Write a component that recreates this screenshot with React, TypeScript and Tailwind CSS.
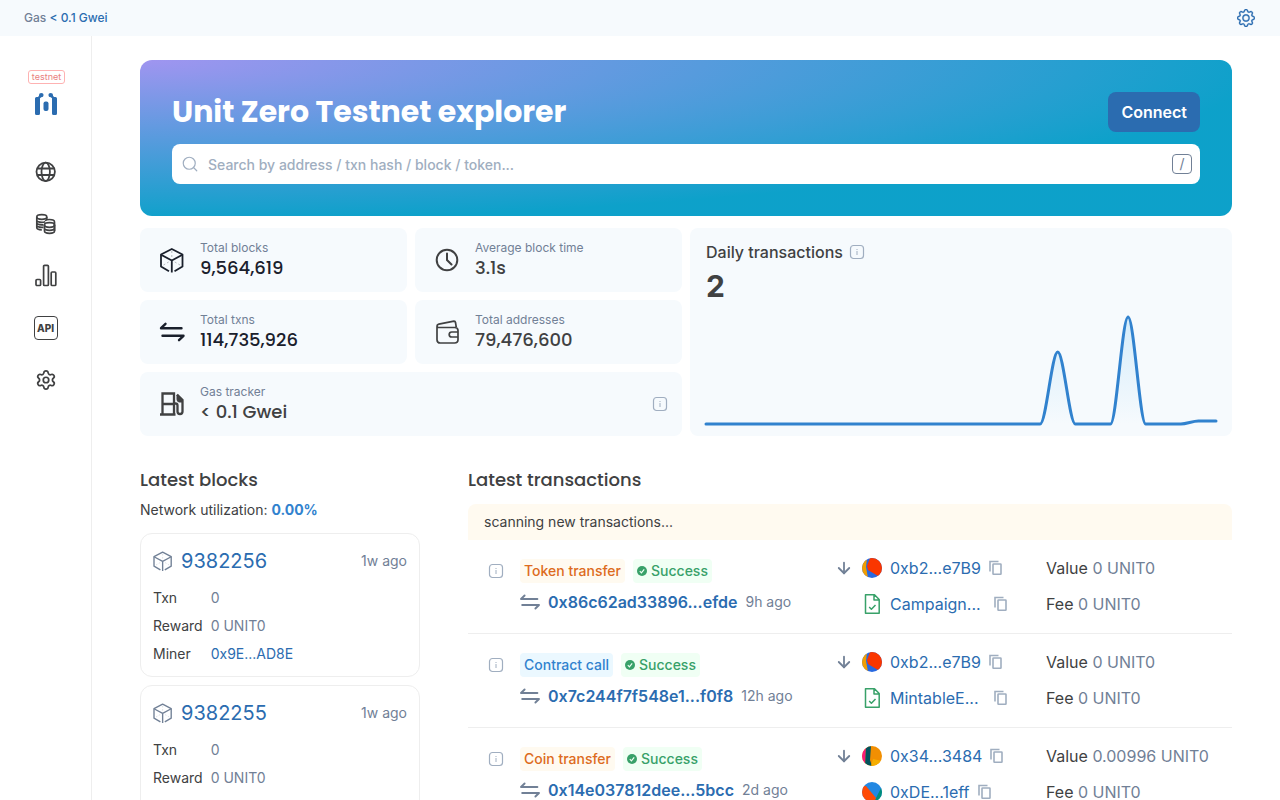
import type { ReactNode } from 'react'
import { ArrowDown, Search, Settings } from 'lucide-react'
import { BsGear } from 'react-icons/bs'

const chartValues = [
  0, 0, 0, 0, 0, 0, 0, 0, 0, 0, 0, 0, 0, 0, 0, 0, 0, 0, 0, 0, 72, 0, 0, 0, 107, 0, 0, 0, 3, 3,
]

const blocks = [
  { height: '9382256', age: '1w ago', txn: '0', reward: '0 UNIT0', miner: '0x9E...AD8E' },
  { height: '9382255', age: '1w ago', txn: '0', reward: '0 UNIT0', miner: '0x9E...AD8E' },
]

type Party = { name: string; avatar: 'red' | 'amber' | 'blue' | 'contract' }

type Transaction = {
  type: string
  tone: 'orange' | 'blue'
  hash: string
  age: string
  from: Party
  to: Party
  value: string
  fee: string
}

const transactions: Transaction[] = [
  {
    type: 'Token transfer',
    tone: 'orange',
    hash: '0x86c62ad33896...efde',
    age: '9h ago',
    from: { name: '0xb2...e7B9', avatar: 'red' },
    to: { name: 'Campaign...', avatar: 'contract' },
    value: '0 UNIT0',
    fee: '0 UNIT0',
  },
  {
    type: 'Contract call',
    tone: 'blue',
    hash: '0x7c244f7f548e1...f0f8',
    age: '12h ago',
    from: { name: '0xb2...e7B9', avatar: 'red' },
    to: { name: 'MintableE...', avatar: 'contract' },
    value: '0 UNIT0',
    fee: '0 UNIT0',
  },
  {
    type: 'Coin transfer',
    tone: 'orange',
    hash: '0x14e037812dee...5bcc',
    age: '2d ago',
    from: { name: '0x34...3484', avatar: 'amber' },
    to: { name: '0xDE...1eff', avatar: 'blue' },
    value: '0.00996 UNIT0',
    fee: '0 UNIT0',
  },
]

export default function App() {
  return (
    <div className="min-h-screen bg-white font-[Inter,sans-serif] text-base text-[#404142]">
      <TopBar />
      <div className="flex min-h-[calc(100vh-36px)]">
        <Sidebar />
        <main className="min-w-0 flex-1 px-12 pt-6 pb-12">
          <Hero />
          <Stats />
          <div className="mt-8 flex gap-12">
            <LatestBlocks />
            <LatestTransactions />
          </div>
        </main>
      </div>
    </div>
  )
}

function TopBar() {
  return (
    <header className="flex h-9 items-center justify-between bg-[#f6fafd] px-6 text-xs font-medium">
      <p className="text-[#718096]">
        Gas <a href="#gas" className="text-[#2b6cb0]">&lt; 0.1 Gwei</a>
      </p>
      <button type="button" aria-label="Settings" className="text-[#2b6cb0]">
        <BsGear size={18} strokeWidth={0.3} className="mr-px" />
      </button>
    </header>
  )
}

function Sidebar() {
  return (
    <aside className="flex w-[92px] shrink-0 flex-col items-center border-r border-[#eeeeee] pt-[34px]">
      <span className="ml-0.5 rounded-[3px] border border-[#feb2b2] px-[3px] text-[9px] leading-3 text-[#e98080]">
        testnet
      </span>
      <a href="#home" aria-label="Home" className="mt-2">
        <LogoIcon />
      </a>
      <nav className="mt-[41px] flex flex-col items-center gap-[22px]">
        <NavLink label="Blockchain"><GlobeIcon /></NavLink>
        <NavLink label="Tokens"><CoinsIcon /></NavLink>
        <NavLink label="Charts & stats"><BarsIcon /></NavLink>
        <NavLink label="API">
          <span className="flex size-6 items-center justify-center rounded-[4px] border-[1.5px] border-[#404142] text-[10px] font-extrabold">
            API
          </span>
        </NavLink>
        <NavLink label="Other"><Settings size={22} strokeWidth={1.9} /></NavLink>
      </nav>
    </aside>
  )
}

function NavLink({ label, children }: { label: string; children: ReactNode }) {
  return (
    <a href="#nav" aria-label={label} className="flex size-[30px] items-center justify-center">
      {children}
    </a>
  )
}

function Hero() {
  return (
    <section className="rounded-xl bg-[#4299e1] bg-[radial-gradient(103.03%_103.03%_at_0%_0%,rgba(183,148,244,0.8)_0%,rgba(0,163,196,0.8)_100%)] p-8">
      <div className="flex items-center justify-between">
        <h1 className="font-[Poppins,Inter,sans-serif] text-[30px] leading-10 font-bold text-white">
          Unit Zero Testnet explorer
        </h1>
        <button type="button" className="h-10 rounded-lg bg-[#2b6cb0] px-[13px] font-semibold text-white">
          Connect
        </button>
      </div>
      <form className="mt-3 flex h-10 items-center rounded-lg bg-white px-2">
        <Search size={18} strokeWidth={1.6} className="mx-px shrink-0 text-[#a0aec0]" />
        <input
          type="text"
          aria-label="Search"
          placeholder="Search by address / txn hash / block / token..."
          className="ml-2 min-w-0 flex-1 pt-0.5 text-sm font-medium outline-none placeholder:text-[#a0aec0]"
        />
        <kbd className="flex size-5 shrink-0 items-center justify-center rounded-[4px] border border-[#718096] font-[Inter,sans-serif] text-sm text-[#718096]">
          /
        </kbd>
      </form>
    </section>
  )
}

function Stats() {
  return (
    <section className="mt-3 grid grid-cols-2 gap-2">
      <div className="grid grid-cols-2 gap-2">
        <StatCard label="Total blocks" value="9,564,619" icon={<CubeIcon size={30} />} dark />
        <StatCard label="Average block time" value="3.1s" icon={<ClockIcon />} />
        <StatCard label="Total txns" value="114,735,926" icon={<TxnIcon size={30} />} dark />
        <StatCard label="Total addresses" value="79,476,600" icon={<WalletIcon />} />
        <div className="col-span-2">
          <StatCard label="Gas tracker" value="< 0.1 Gwei" icon={<GasIcon />} info />
        </div>
      </div>
      <DailyTransactions />
    </section>
  )
}

interface StatCardProps {
  label: string
  value: string
  icon: ReactNode
  dark?: boolean
  info?: boolean
}

function StatCard({ label, value, icon, dark, info }: StatCardProps) {
  return (
    <div className={`flex h-16 items-center rounded-lg bg-[#f6fafd] pr-3.5 pl-4 ${dark ? 'text-[#1a202c]' : ''}`}>
      {icon}
      <div className="ml-3.5 flex-1">
        <p className="text-xs leading-4 text-[#718096]">{label}</p>
        <p className="font-[Poppins,Inter,sans-serif] text-lg leading-6 font-medium">{value}</p>
      </div>
      {info && <InfoIcon />}
    </div>
  )
}

function DailyTransactions() {
  return (
    <div className="flex flex-col rounded-lg bg-[#f6fafd] px-4 pt-3">
      <div className="flex items-center gap-1.5">
        <h2 className="font-medium">Daily transactions</h2>
        <InfoIcon />
      </div>
      <p className="mt-0.5 text-[30px] leading-10 font-bold">2</p>
      <Chart />
    </div>
  )
}

function Chart() {
  const step = 510 / (chartValues.length - 1)
  const base = 118
  let line = `M0 ${base - chartValues[0]}`
  for (let i = 1; i < chartValues.length; i++) {
    const x0 = (i - 1) * step
    const x1 = i * step
    const y0 = base - chartValues[i - 1]
    const y1 = base - chartValues[i]
    line += ` C${x0 + step / 3} ${y0} ${x1 - step / 3} ${y1} ${x1} ${y1}`
  }

  return (
    <svg viewBox="0 0 510 128" preserveAspectRatio="none" className="h-32 w-full overflow-visible" aria-hidden="true">
      <defs>
        <linearGradient id="area" x1="0" y1="0" x2="0" y2="1">
          <stop offset="0" stopColor="#bee3f8" stopOpacity="0.6" />
          <stop offset="1" stopColor="#bee3f8" stopOpacity="0" />
        </linearGradient>
      </defs>
      <path d={`${line} V${base} H0 Z`} fill="url(#area)" />
      <path
        d={line}
        fill="none"
        stroke="#3182ce"
        strokeWidth="3"
        strokeLinecap="round"
        strokeLinejoin="round"
        vectorEffect="non-scaling-stroke"
      />
    </svg>
  )
}

function LatestBlocks() {
  return (
    <section className="w-[280px] shrink-0">
      <h2 className="font-[Poppins,Inter,sans-serif] text-lg leading-6 font-medium">Latest blocks</h2>
      <p className="mt-2 text-sm">
        Network utilization: <span className="font-bold text-[#3182ce]">0.00%</span>
      </p>
      <div className="mt-[13px] flex flex-col gap-2">
        {blocks.map((block) => (
          <article key={block.height} className="rounded-xl border border-[#eeeeee] p-3 text-sm">
            <div className="mb-3 flex h-[30px] items-center">
              <span className="-ml-[3px] text-[#718096]"><CubeIcon size={24} thin /></span>
              <a href="#block" className="ml-[7px] text-xl text-[#2b6cb0]">{block.height}</a>
              <span className="ml-auto text-[#718096]">{block.age}</span>
            </div>
            <dl className="grid grid-cols-[auto_1fr] gap-2 text-[#718096]">
              <dt className="text-[#404142]">Txn</dt>
              <dd>{block.txn}</dd>
              <dt className="text-[#404142]">Reward</dt>
              <dd>{block.reward}</dd>
              <dt className="text-[#404142]">Miner</dt>
              <dd><a href="#miner" className="text-[#2b6cb0]">{block.miner}</a></dd>
            </dl>
          </article>
        ))}
      </div>
    </section>
  )
}

function LatestTransactions() {
  return (
    <section className="min-w-0 flex-1">
      <h2 className="font-[Poppins,Inter,sans-serif] text-lg leading-6 font-medium">Latest transactions</h2>
      <p className="mt-3 rounded-t-lg bg-[#fffaf0] px-4 py-2 text-sm">scanning new transactions...</p>
      <ul>
        {transactions.map((tx) => (
          <TransactionRow key={tx.hash} tx={tx} />
        ))}
      </ul>
    </section>
  )
}

function TransactionRow({ tx }: { tx: Transaction }) {
  const tone = tx.tone === 'orange' ? 'bg-[#fffaf0] text-[#dd6b20]' : 'bg-[#ebf8ff] text-[#3182ce]'

  return (
    <li className="grid grid-cols-[52px_minmax(0,1fr)_210px_186px] border-b border-[#eeeeee] pt-4 pb-[17px]">
      <button type="button" aria-label="Transaction details" className="mt-[7px] ml-5 h-4 w-4">
        <InfoIcon />
      </button>
      <div className="mt-[3px]">
        <div className="flex gap-2">
          <span className={`rounded-[4px] px-1 py-0.5 text-sm font-medium ${tone}`}>{tx.type}</span>
          <span className="flex items-center gap-1 rounded-[4px] bg-[#f0fff4] px-1 py-0.5 text-sm font-medium text-[#38a169]">
            <SuccessIcon />
            Success
          </span>
        </div>
        <div className="mt-[7px] flex items-center">
          <span className="-ml-[3px] text-[#718096]"><TxnIcon size={24} /></span>
          <a href="#tx" className="ml-[7px] font-semibold text-[#2b6cb0]">{tx.hash}</a>
          <span className="ml-2 text-sm text-[#718096]">{tx.age}</span>
        </div>
      </div>
      <div className="flex">
        <ArrowDown size={18} strokeWidth={2.4} className="mt-[3px] mr-[9px] -ml-px text-[#718096]" />
        <div className="flex flex-col gap-3">
          <PartyLine party={tx.from} />
          <PartyLine party={tx.to} />
        </div>
      </div>
      <div className="flex flex-col gap-3">
        <p>Value <span className="text-[#718096]">{tx.value}</span></p>
        <p>Fee <span className="text-[#718096]">{tx.fee}</span></p>
      </div>
    </li>
  )
}

function PartyLine({ party }: { party: Party }) {
  const isContract = party.avatar === 'contract'

  return (
    <div className="flex h-6 items-center gap-2">
      {isContract ? <ContractIcon /> : <Avatar kind={party.avatar} />}
      <a href="#address" className={`text-[#2b6cb0] ${isContract ? 'w-24' : ''}`}>{party.name}</a>
      <button type="button" aria-label={`Copy ${party.name}`} className="text-[#a0aec0]">
        <CopyIcon />
      </button>
    </div>
  )
}

function Avatar({ kind }: { kind: Party['avatar'] }) {
  return (
    <svg width="20" height="20" viewBox="0 0 20 20" className="rounded-full" aria-hidden="true">
      {kind === 'red' && (
        <>
          <rect width="20" height="20" fill="#2869e0" />
          <path d="M0 0h5L4 9l2 11H0Z" fill="#f19e02" />
          <path d="M8 0h12v17l-4 1-10-6-1-4Z" fill="#fa3600" />
        </>
      )}
      {kind === 'amber' && (
        <>
          <rect width="20" height="20" fill="#f28f02" />
          <path d="M0 0h4l-1 20H0Z" fill="#fb1879" />
          <path d="M4 0h5L8 14l2 6H3Z" fill="#03535e" />
          <path d="m11 13 9 2v5H9Z" fill="#f5ae00" />
        </>
      )}
      {kind === 'blue' && (
        <>
          <rect width="20" height="20" fill="#2388e2" />
          <path d="m20 4-8 16h8Z" fill="#018e7b" />
          <path d="m0 4 4 0 10 12-2 4H0Z" fill="#ff4a05" />
        </>
      )}
    </svg>
  )
}

function LogoIcon() {
  return (
    <svg width="24" height="24" viewBox="0 0 24 24" fill="#2b6cb0" aria-hidden="true">
      <path d="M1 6.500Q1 5 2.500 5H4L5 3.800V3Q5 1 7.300 1 9.600 1 9.600 3 9.600 5.200 7.200 5.200L6 6.200V21.500Q6 23 4.500 23H2.500Q1 23 1 21.500Z" />
      <path d="M23 6.500Q23 5 21.500 5H20L19 3.800V3Q19 1 16.700 1 14.400 1 14.400 3 14.400 5.200 16.800 5.200L18 6.200V21.500Q18 23 19.500 23H21.500Q23 23 23 21.500Z" />
      <rect x="9.500" y="9.500" width="5" height="9.500" rx="2" />
    </svg>
  )
}

function GlobeIcon() {
  return (
    <svg width="22" height="22" viewBox="0 0 22 22" fill="none" stroke="currentColor" strokeWidth="1.800" aria-hidden="true">
      <circle cx="10.700" cy="10.800" r="9.200" />
      <ellipse cx="10.700" cy="10.800" rx="4.200" ry="9.200" />
      <path d="M2 7.500h17.400M2 14h17.400" />
    </svg>
  )
}

function CoinsIcon() {
  return (
    <svg width="22" height="22" viewBox="0 0 22 22" fill="none" stroke="currentColor" strokeWidth="1.700" aria-hidden="true">
      <ellipse cx="6.800" cy="4" rx="5" ry="2.300" />
      <path d="M1.800 4v10.500c0 1.300 2.200 2.300 5 2.300M11.800 4v3M1.800 7c0 1.300 2.200 2.300 5 2.300 1.300 0 2.500-.2 3.400-.6M1.800 9.500c0 1.300 2.200 2.300 5 2.300h1.700M1.800 12c0 1.300 2.200 2.300 5 2.300h1.700" />
      <path d="M10 7.700c.9-.7 2.500-1.200 4.500-1.200 2.800 0 5 1 5 2.400v9" />
      <ellipse cx="14.500" cy="12" rx="5" ry="2.300" />
      <path d="M9.500 12v6c0 1.300 2.200 2.300 5 2.300s5-1 5-2.300v-6M9.500 15c0 1.300 2.200 2.300 5 2.300s5-1 5-2.300" />
    </svg>
  )
}

function BarsIcon() {
  return (
    <svg width="22" height="24" viewBox="0 0 22 24" fill="none" stroke="currentColor" strokeWidth="1.700" aria-hidden="true">
      <rect x="1" y="15.500" width="4.600" height="6" rx="1" />
      <rect x="8.600" y="1.300" width="4.800" height="20.200" rx="1" />
      <rect x="16.200" y="8" width="4.600" height="13.500" rx="1" />
    </svg>
  )
}

function CubeIcon({ size, thin }: { size: number; thin?: boolean }) {
  return (
    <svg
      width={size}
      height={size}
      viewBox="0 0 30 30"
      fill="none"
      stroke="currentColor"
      strokeWidth={thin ? 1.7 : 1.8}
      strokeLinejoin="round"
      className="shrink-0"
      aria-hidden="true"
    >
      <path d="M13 26.200 5 21.500V9.500L15.800 4 26.500 9.500v12l-8 4.700" />
      <path d="m5 9.700 10.800 5.800 10.700-5.800M15.800 15.500v12" />
      <path d="M15.800 6v7M7.500 20l6-3.500M24 20l-6-3.500" strokeWidth="0.600" strokeDasharray="2 2" opacity="0.500" />
    </svg>
  )
}

function TxnIcon({ size }: { size: number }) {
  return (
    <svg
      width={size}
      height={size}
      viewBox="0 0 30 30"
      fill="none"
      stroke="currentColor"
      strokeWidth="2.400"
      strokeLinecap="round"
      strokeLinejoin="round"
      className="shrink-0"
      aria-hidden="true"
    >
      <path d="M25.500 11.200H5L9.500 6.800M6.500 18.800h21L23 23.200" />
    </svg>
  )
}

function ClockIcon() {
  return (
    <svg width="30" height="30" viewBox="0 0 30 30" fill="none" stroke="currentColor" strokeWidth="2" strokeLinecap="round" aria-hidden="true">
      <circle cx="16" cy="15" r="10.300" />
      <path d="M16 8.500V15l4.500 4.500" />
    </svg>
  )
}

function WalletIcon() {
  return (
    <svg width="30" height="30" viewBox="0 0 30 30" fill="none" stroke="currentColor" strokeWidth="1.700" strokeLinejoin="round" aria-hidden="true">
      <path d="M6 9.500v13.200Q6 26 9.300 26h14.200Q27 26 27 22.800V13.500q0-3-3.300-3H7.500Q6 10.300 6 9q0-1.500 1.800-1.900L23 4.200q1.300 0 1.500 1.300l.8 4.900" />
      <path d="M27 15h-6.300a2.500 2.500 0 0 0 0 5H27" />
    </svg>
  )
}

function GasIcon() {
  return (
    <svg width="30" height="30" viewBox="0 0 30 30" fill="none" stroke="currentColor" strokeWidth="2.300" aria-hidden="true">
      <path d="M6.500 26V4.500H18V26M4 25.500h15.500M7 15h11" />
      <path d="M18 14.500h1.500q2 0 2 2v6q0 2.500 2.500 2.500t2.500-2.500V11L21 5.500" />
      <path d="M21 6v4.500q0 2 2 2.500h3.500v-2Z" fill="currentColor" strokeWidth="1" />
    </svg>
  )
}

function InfoIcon() {
  return (
    <svg width="16" height="16" viewBox="0 0 16 16" fill="none" stroke="#a0aec0" strokeWidth="1.200" className="shrink-0" aria-hidden="true">
      <rect x="1.500" y="1.500" width="13" height="13" rx="3" />
      <path d="M8 7v4M8 5v1" strokeWidth="1" />
    </svg>
  )
}

function SuccessIcon() {
  return (
    <svg width="10" height="10" viewBox="0 0 10 10" fill="none" aria-hidden="true">
      <circle cx="5" cy="5" r="5" fill="currentColor" />
      <path d="m2.800 5.200 1.600 1.600 2.800-3.400" stroke="#f0fff4" strokeWidth="1.200" />
    </svg>
  )
}

function ContractIcon() {
  return (
    <svg width="20" height="20" viewBox="0 0 20 20" fill="none" stroke="#38a169" strokeWidth="1.500" strokeLinejoin="round" aria-hidden="true">
      <path d="M3.500.8h9L17.200 5.500v13.700H3.500ZM12 1v5h5" />
      <path d="m7.200 13 2.200 2.200L13.500 11" />
    </svg>
  )
}

function CopyIcon() {
  return (
    <svg width="14" height="16" viewBox="0 0 14 16" fill="none" stroke="currentColor" strokeWidth="1.600" aria-hidden="true">
      <path d="M1 11.500V1.500h8.500" />
      <rect x="4" y="4" width="8" height="10.300" rx="0.500" />
    </svg>
  )
}
